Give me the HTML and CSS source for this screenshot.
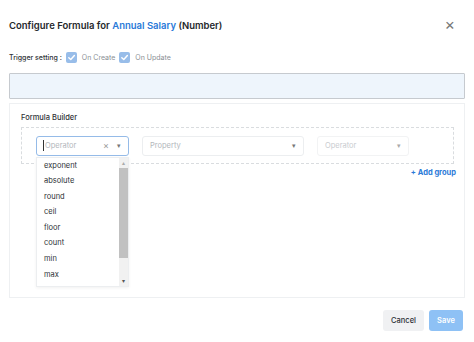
FILE: index.html
```html
<!DOCTYPE html>
<html lang="en">
<head>
    <meta charset="UTF-8">
    <meta name="viewport" content="width=device-width, initial-scale=1.0">
    <title>Configure Formula</title>
    <link rel="stylesheet" href="styles.css">
</head>
<body>
    <div class="modal">
        <div class="modal-header">
            <h2 class="modal-title">Configure Formula for <span class="field-name">Annual Salary</span> (Number)</h2>
            <span class="close-btn">&times;</span>
        </div>

        <div class="trigger-row">
            <span class="trigger-label">Trigger setting :</span>
            <span class="checkbox">
                <svg width="9" height="9" viewBox="0 0 10 10"><path d="M2 5.2 L4.2 7.3 L8.2 2.8" fill="none" stroke="#fff" stroke-width="1.6" stroke-linecap="round" stroke-linejoin="round"/></svg>
            </span>
            <span class="check-text">On Create</span>
            <span class="checkbox">
                <svg width="9" height="9" viewBox="0 0 10 10"><path d="M2 5.2 L4.2 7.3 L8.2 2.8" fill="none" stroke="#fff" stroke-width="1.6" stroke-linecap="round" stroke-linejoin="round"/></svg>
            </span>
            <span class="check-text">On Update</span>
        </div>

        <div class="formula-box"></div>

        <div class="builder">
            <div class="builder-label">Formula Builder</div>
            <div class="group">
                <div class="select-wrap">
                    <div class="select select-focus">
                        <span class="caret"></span>
                        <span class="placeholder">Operator</span>
                        <span class="clear">&times;</span>
                        <span class="arrow">&#9662;</span>
                    </div>
                    <div class="dropdown">
                        <ul class="options">
                            <li>exponent</li>
                            <li>absolute</li>
                            <li>round</li>
                            <li>ceil</li>
                            <li>floor</li>
                            <li>count</li>
                            <li>min</li>
                            <li>max</li>
                        </ul>
                        <div class="scrollbar">
                            <span class="scroll-up">&#9652;</span>
                            <div class="scroll-track"><div class="scroll-thumb"></div></div>
                            <span class="scroll-down">&#9662;</span>
                        </div>
                    </div>
                </div>
                <div class="select select-property">
                    <span class="placeholder">Property</span>
                    <span class="arrow">&#9662;</span>
                </div>
                <div class="select select-disabled">
                    <span class="placeholder">Operator</span>
                    <span class="arrow">&#9662;</span>
                </div>
            </div>
            <div class="add-row">
                <a class="add-group">+ Add group</a>
            </div>
        </div>

        <div class="modal-footer">
            <button class="btn btn-cancel">Cancel</button>
            <button class="btn btn-save">Save</button>
        </div>
    </div>
</body>
</html>
```

FILE: styles.css
```css
* {
    margin: 0;
    padding: 0;
    box-sizing: border-box;
}

body {
    font-family: Inter, "Noto Sans", Arial, sans-serif;
    background: #fff;
    color: #1f2329;
}

.modal {
    width: 474px;
    height: 342px;
    padding: 0 9px 0 9px;
    display: flex;
    flex-direction: column;
}

.modal-header {
    height: 50px;
    display: flex;
    align-items: center;
    justify-content: space-between;
    padding-top: 1px;
}

.modal-title {
    font-size: 9.5px;
    font-weight: 600;
    color: #25282c;
}

.field-name {
    color: #2a7ad8;
}

.close-btn {
    font-size: 16px;
    color: #777;
    margin-right: 10px;
    line-height: 1;
    margin-top: -3px;
}

.trigger-row {
    height: 14px;
    display: flex;
    align-items: center;
    font-size: 7px;
}

.trigger-label {
    color: #2f3337;
    font-weight: 500;
    margin-right: 4px;
}

.checkbox {
    width: 11px;
    height: 11px;
    border-radius: 2px;
    background: #98bde9;
    display: flex;
    align-items: center;
    justify-content: center;
    margin-right: 5px;
}

.check-text {
    color: #8a8f95;
    margin-right: 4px;
}

.formula-box {
    margin-top: 9px;
    height: 26px;
    width: 456px;
    background: #eef5fc;
    border: 1px solid #c6cacf;
    border-radius: 1px;
}

.builder {
    margin-top: 4px;
    height: 195px;
    width: 456px;
    border: 1px solid #eef0f2;
    padding: 8px 11px 0 11px;
}

.builder-label {
    font-size: 7.5px;
    color: #2f3337;
    font-weight: 500;
    height: 11px;
    line-height: 11px;
}

.group {
    margin-top: 4px;
    height: 37px;
    width: 433px;
    border: 1px dashed #d9dcdf;
    display: flex;
    align-items: center;
    padding-left: 14px;
    gap: 13px;
}

.select-wrap {
    position: relative;
}

.select {
    height: 20px;
    border: 1px solid #eceef0;
    border-radius: 3px;
    display: flex;
    align-items: center;
    padding: 0 7px;
    font-size: 7.5px;
    background: #fff;
}

.select-focus {
    width: 93px;
    border-color: #95bbe8;
    padding-left: 6px;
}

.caret {
    width: 1px;
    height: 11px;
    background: #333;
    margin-right: 1px;
}

.placeholder {
    color: #b3b7bc;
    flex: 1;
}

.clear {
    color: #999;
    font-size: 9px;
    margin-right: 8px;
}

.arrow {
    color: #777;
    font-size: 7px;
}

.select-property {
    width: 162px;
}

.select-disabled {
    width: 92px;
    border-color: #f2f3f4;
}

.select-disabled .placeholder {
    color: #c9ccd0;
}

.select-disabled .arrow {
    color: #aaa;
}

.dropdown {
    position: absolute;
    top: 21px;
    left: 0;
    width: 93px;
    height: 130px;
    background: #fff;
    border: 1px solid #eceef0;
    box-shadow: 0 1px 3px rgba(0, 0, 0, 0.06);
    display: flex;
}

.options {
    list-style: none;
    flex: 1;
}

.options li {
    height: 15.6px;
    line-height: 15.6px;
    padding-left: 7px;
    font-size: 7.5px;
    color: #2c3035;
}

.scrollbar {
    width: 9px;
    display: flex;
    flex-direction: column;
    align-items: center;
    background: #f1f1f1;
}

.scroll-up,
.scroll-down {
    height: 10px;
    font-size: 6px;
    line-height: 10px;
    color: #555;
}

.scroll-up {
    color: #aaa;
}

.scroll-track {
    flex: 1;
    width: 100%;
}

.scroll-thumb {
    width: 100%;
    height: 90px;
    background: #c1c1c1;
}

.add-row {
    display: flex;
    justify-content: flex-end;
    margin-right: -3px;
    margin-top: 4px;
}

.add-group {
    font-size: 7.5px;
    font-weight: 700;
    color: #2a7ad8;
}

.modal-footer {
    margin-top: 12px;
    display: flex;
    justify-content: flex-end;
    gap: 5px;
    padding-right: 2px;
}

.btn {
    height: 21px;
    border: none;
    border-radius: 3px;
    font-family: Inter, "Noto Sans", Arial, sans-serif;
    font-size: 7.5px;
    font-weight: 500;
}

.btn-cancel {
    width: 41px;
    background: #f0f1f3;
    color: #2c3035;
}

.btn-save {
    width: 34px;
    background: #8ec1f5;
    color: #fff;
    font-weight: 600;
}
```
